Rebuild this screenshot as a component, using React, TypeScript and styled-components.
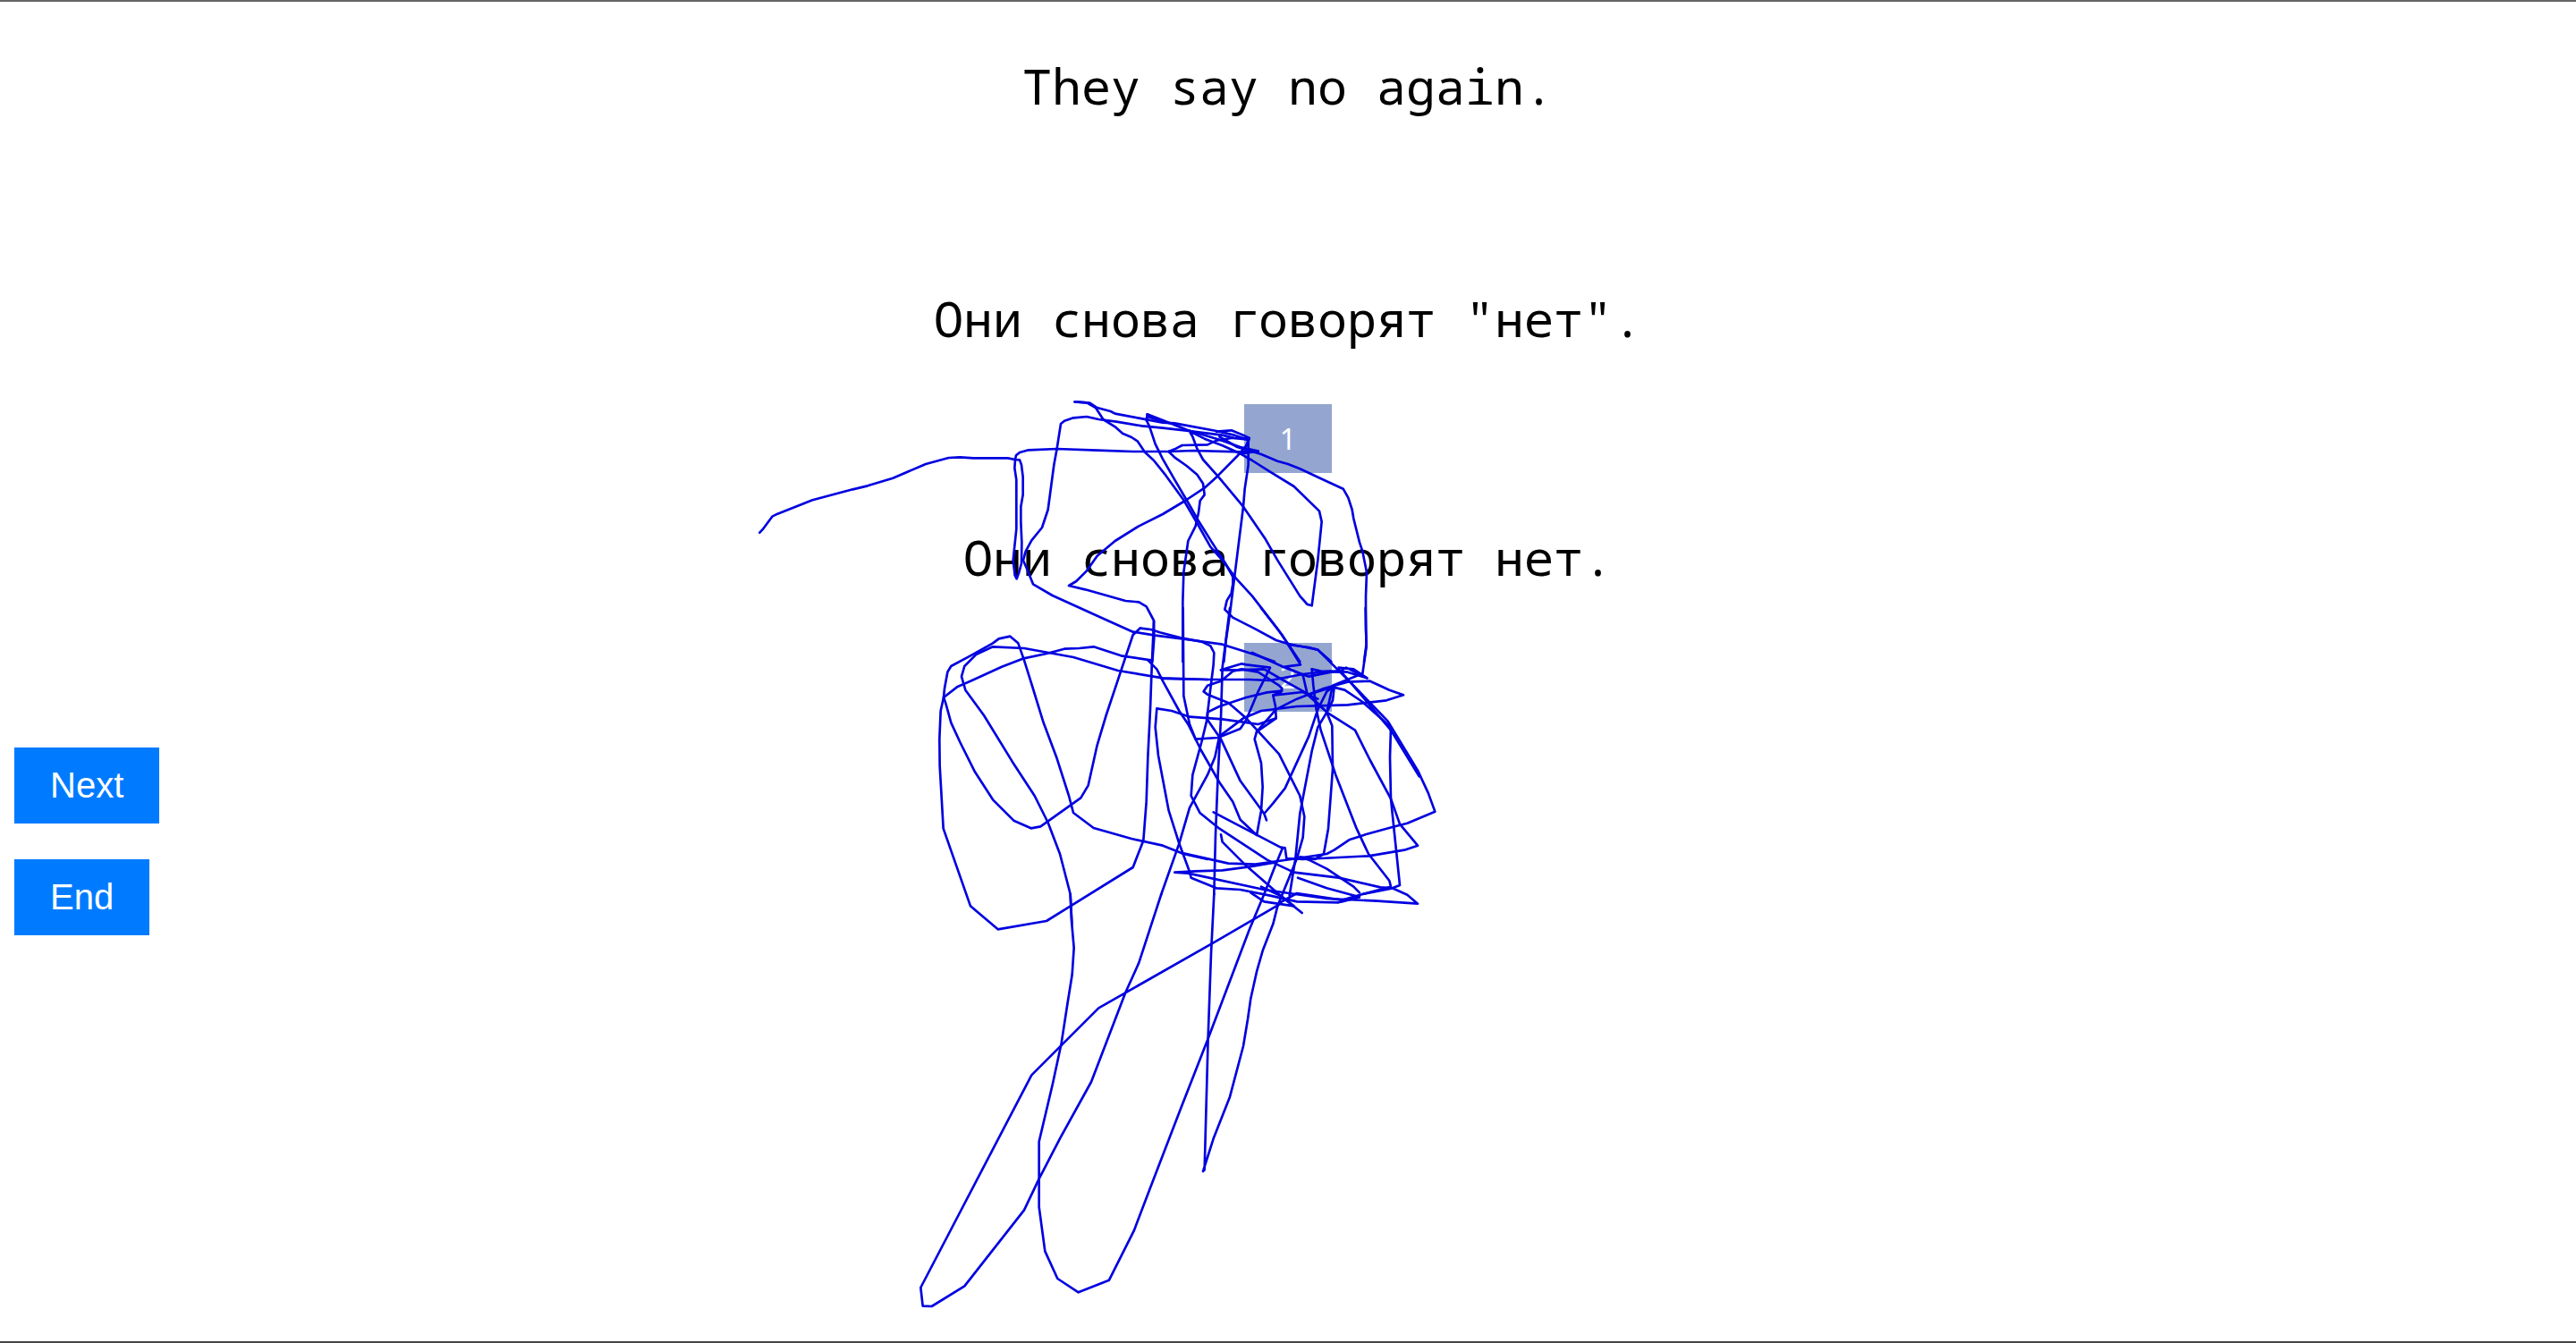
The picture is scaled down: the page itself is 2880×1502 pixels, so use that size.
import React from 'react';
import styled, { createGlobalStyle } from 'styled-components';

const GlobalStyle = createGlobalStyle`
  * { box-sizing: border-box; }
  body { margin: 0; background: #fff; }
`;

const Page = styled.main`
  position: relative;
  display: flex;
  flex-direction: column;
  min-height: 100vh;
  padding: 60px 16px 16px;
  border-top: 2px solid #666;
  border-bottom: 2px solid #444;
  overflow: hidden;
`;

const Sentence = styled.h1`
  margin: 0 0 192px;
  font: 400 55px/68px 'Noto Sans Mono', 'DejaVu Sans Mono', monospace;
  color: #000;
  text-align: center;
`;

const Answers = styled.ol`
  display: flex;
  flex-direction: column;
  gap: 60px;
  margin: 0 0 40px;
  padding: 0;
  list-style: none;
`;

const Answer = styled.li`
  display: flex;
  flex-direction: column;
  align-items: center;
  gap: 62px;
`;

const AnswerText = styled.label`
  font: 400 55px/68px 'Noto Sans Mono', 'DejaVu Sans Mono', monospace;
  color: #000;
`;

const Choice = styled.button`
  width: 98px;
  height: 77px;
  padding: 0;
  border: 0;
  background: #94a6d0;
  color: #fff;
  font: 400 32px/40px 'Noto Sans', sans-serif;
`;

const Actions = styled.div`
  display: flex;
  flex-direction: column;
  align-items: flex-start;
  gap: 40px;
`;

const Action = styled.button`
  padding: 20px 40px;
  border: 0;
  background: #007bff;
  color: #fff;
  font: 400 40px/45px 'Liberation Sans', Arial, sans-serif;
`;

const Ink = styled.svg`
  position: absolute;
  inset: -2px 0 0;
  width: 100%;
  height: 100%;
  overflow: visible;
  pointer-events: none;
`;

type Patch = { x: number; y: number; strokes: string[] };

/* Pen strokes, grouped by area. Each area's origin is measured from the
   top centre of the page; stroke points are in thirds of a pixel. */
const patches: Patch[] = [
  {
    x: -620,
    y: 430,
    strokes: ['88,497 100,484 130,443 148,434 265,388 400,352 450,340 535,314 645,267 722,246 760,244 805,247 920,247 945,252'],
  },
  {
    x: -340,
    y: 420,
    strokes: [
      '105,282 120,283 126,300 131,340 131,400 124,440 124,490 127,560 126,630 118,660 110,682 104,670 98,620 109,515 109,350 103,310 105,282 108,268 120,258 150,250 245,246 380,251 500,255 620,255 700,252 860,256 920,254',
      '305,88 345,91 375,108 400,147 440,172 465,194 495,207 515,220 540,257 570,285 610,335 670,418 715,495 760,575 800,620 845,680 900,740 985,850 1020,900 1060,960',
      '305,88 355,92 380,108 425,120 440,128 520,143 600,158 640,160 780,186 840,200 885,215',
      '885,215 840,210 800,200 720,190 680,185 600,176 530,169 445,155 385,147 345,138 300,142 270,152 258,162 245,245 235,300 215,450 195,510 160,553 140,590 132,620 145,650 165,700 230,738 400,815 500,860 575,872 700,888 800,902 905,935 975,960',
      '548,130 600,150 680,182 740,212 800,235 860,262 900,285 955,320 1040,372 1125,455 1133,490 1120,620 1100,772 1085,768 1060,740 985,620 945,550 870,440 785,338 735,282 715,245 700,205 688,185 640,165 548,138',
      '548,130 545,150 555,170 575,230 600,280 640,350 690,435 715,480 765,560 810,630 835,675 835,700 830,730 815,755 808,785 835,812 910,850 980,888 1020,900 1080,912 1120,920 1165,960',
      '620,255 640,275 680,303 715,332 735,362 740,400 725,420 720,460 710,505 685,555 680,590 670,660 667,760 667,960',
      '620,255 640,247 665,234 750,232 780,218 830,210 890,210',
      '890,210 885,230 850,270 783,338 740,377 675,420 600,465 520,505 440,555 380,605 345,655 310,690 285,705 340,718 475,756 520,760 545,775 570,822 571,880 565,960',
      '887,215 887,300 875,380 870,440 855,560 840,680 825,800 812,890 805,960',
      '780,188 830,184 870,200 890,210 880,235',
      '690,185 790,215 860,240 920,254 860,262',
      '790,205 850,240 930,264 985,287 1020,297 1060,313 1140,350 1205,380 1222,410 1235,450 1240,480 1260,560 1270,590 1284,660 1281,740 1281,850 1283,900 1275,960',
    ],
  },
  {
    x: -420,
    y: 680,
    strokes: [
      '765,67 740,90 715,165 650,360 620,460 590,595 565,637 430,733 398,739 340,713 270,643 210,550 160,450 130,385 112,320 105,300 108,270 118,215 130,195 195,160 270,118 290,103 328,95 355,118 375,175 400,255 440,385 485,505 525,630 540,687 608,738 735,774 840,797 910,825 990,843',
      '105,300 150,265 200,243 300,197 370,170 450,153 510,137 560,135 608,130 700,160 800,175',
      '990,240 840,235 690,210 540,165 375,135 270,130 215,155 175,195 165,230 178,275 240,360 335,515 410,630 455,720 495,825 530,960 535,1060',
      '105,300 95,345 91,440 92,530 104,740 195,1000 287,1078 450,1050 740,870 775,780 785,650 790,500 798,340 803,200 810,45',
    ],
  },
  {
    x: -190,
    y: 680,
    strokes: [
      '75,68 110,72 140,82 210,100 280,113 310,127 322,150 320,190 310,270 297,380 280,450 250,560 245,630 275,688 340,740 500,845 590,887 740,905 880,937 920,940 970,962 1005,992 870,983 700,975 490,945 235,890 190,887 260,883 350,880 440,868 520,855',
      '220,823 370,857 460,860 580,843 700,825 725,812 775,778 830,760 920,735 970,722 1063,683 1040,620 1005,545 905,380 780,250 670,140 640,132 570,123',
      '450,150 560,200 640,230 740,210',
      '480,0 550,90 612,190 560,197 620,225 635,290 690,340',
      '100,175 130,205 150,245 205,345 235,390 280,480 340,585 385,650 410,710 465,762 480,680 485,600 480,520 458,440 465,415 530,370 528,330 520,293',
      '150,237 300,240 440,240 510,243 620,222 710,212 770,215 835,235',
      '218,0 220,295 240,390 260,440 335,435 410,405 430,375 470,280 510,200 430,190 415,187 345,208',
      '345,208 400,208 490,205 550,240 640,290 700,350 795,410 845,510 915,640 945,725 1005,797 960,812 840,832 620,843 565,840 560,805 545,803 320,685',
      '552,805 525,870 490,960',
      '375,0 350,200 345,370 335,560 327,760 322,960',
      '345,245 300,260 287,280 300,290 370,318 430,370 540,490 610,630 625,700 620,770 600,840 535,1000',
      '345,245 385,212 415,205 470,215 540,260 550,270 545,285 520,293 620,282 670,305',
      '520,293 550,278 500,283 430,300 340,330 300,350 300,375 345,440 410,580 490,690 498,712 490,690 520,655 560,605 640,430 670,340 700,280 720,265',
      '530,370 470,390 350,373 240,365 180,345 130,337 125,400 135,495 170,680 205,790 240,885 245,905 330,940 410,945 510,965 600,985 740,988 810,965',
      '340,430 420,370 480,345 600,330 770,325 900,310 957,292 910,275 845,245 770,248 690,270 600,305 530,340 465,415',
      '340,430 325,500 300,560 240,670 205,790 145,960',
      '650,205 655,260 665,340 680,410 730,560 800,740 840,825 910,915 915,935 820,960 750,980 600,957 540,990',
      '650,205 680,212 740,215 765,200 835,235 790,205 740,200',
      '830,0 833,130 820,220 720,260 700,350 670,400 650,480 610,690 595,840 575,965',
      '640,290 720,265 760,275 820,315 915,400 912,500 915,640 945,930 920,940 820,960',
      '725,265 720,310 700,350 718,395 720,540 705,740 690,825 660,843 610,835 640,845 700,875 790,935 810,955',
      '603,905 700,940 810,970 750,985',
      '345,760 350,785 430,865 545,965 617,1023',
      '445,955 490,985 590,1000 545,965 480,935',
      '740,205 780,250 915,410 1010,565',
    ],
  },
  {
    x: -440,
    y: 1000,
    strokes: [
      '590,0 595,100 602,180 596,270 580,370 560,500 530,640 485,830 485,1050 505,1198 547,1290 617,1336 720,1295 803,1130 860,980 960,720 1050,490 1190,120 1240,0',
      '895,0 820,230 775,330 660,630 555,820 485,955 435,1060 235,1315 125,1383 95,1382 88,1320 460,607 685,382 1075,160 1290,35',
      '1072,0 1062,200 1052,480 1040,925 1035,930 1070,820 1125,680 1170,510 1185,420 1195,350 1215,260 1235,190 1270,100 1285,40',
    ],
  },
];

const answers = ['Они снова говорят "нет".', 'Они снова говорят нет.'];

export default function App() {
  return (
    <>
      <GlobalStyle />
      <Page>
        <Sentence>They say no again.</Sentence>
        <Answers>
          {answers.map((text, i) => (
            <Answer key={text}>
              <AnswerText htmlFor={`choice-${i + 1}`}>{text}</AnswerText>
              <Choice id={`choice-${i + 1}`} type="button">{i + 1}</Choice>
            </Answer>
          ))}
        </Answers>
        <Actions>
          <Action type="button">Next</Action>
          <Action type="button">End</Action>
        </Actions>
        <Ink aria-hidden="true">
          <svg x="50%" overflow="visible" fill="none" stroke="#0000e0" strokeWidth="8" strokeLinejoin="round" strokeLinecap="round">
            {patches.map((p) => (
              <g key={`${p.x} ${p.y}`} transform={`translate(${p.x} ${p.y}) scale(${1 / 3})`}>
                {p.strokes.map((points) => (
                  <polyline key={points} points={points} />
                ))}
              </g>
            ))}
          </svg>
        </Ink>
      </Page>
    </>
  );
}
